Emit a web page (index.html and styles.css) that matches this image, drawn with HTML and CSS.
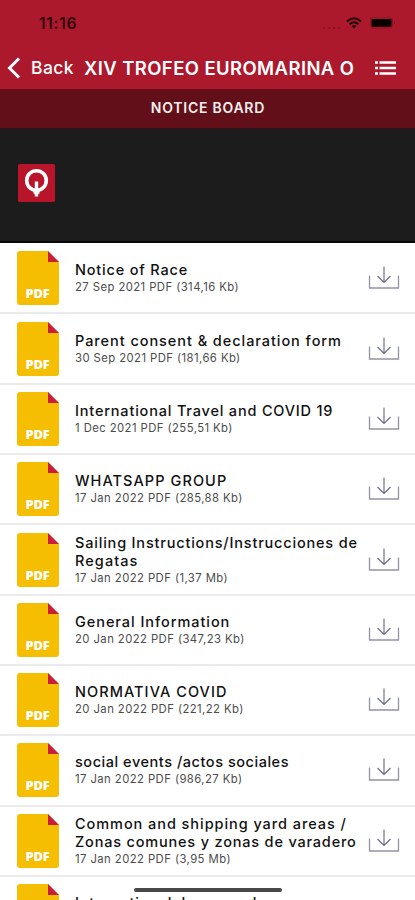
FILE: index.html
```html
<!DOCTYPE html>
<html lang="en">
<head>
<meta charset="utf-8">
<title>Notice Board</title>
<link rel="stylesheet" href="styles.css">
</head>
<body>
<svg class="defs" width="0" height="0" aria-hidden="true">
  <symbol id="file" viewBox="0 0 42 54"><path fill="#f5be00" d="M3 0H31L42 11V51a3 3 0 0 1-3 3H3a3 3 0 0 1-3-3V3a3 3 0 0 1 3-3z"/><path fill="#c91f3c" d="M31 0L42 11H31z"/></symbol>
  <symbol id="download" viewBox="0 0 32 24"><path fill="none" stroke="#9294a4" stroke-width="1.3" d="M1.5 9.5V22H30.5V9.5"/><path fill="none" stroke="#666982" stroke-width="1.1" d="M16 .5V16.5M9.5 10L16 16.5L22.5 10"/></symbol>
</svg>
<div class="screen">
  <header class="top">
    <div class="status">
      <span class="time">11:16</span>
      <span class="dots">....</span>
      <svg class="wifi" viewBox="0 0 16 12"><g fill="none" stroke="#20060a" stroke-width="2"><path d="M.9 4.6Q8-2 15.1 4.6"/><path d="M3.6 7.3Q8 3.1 12.4 7.3"/></g><path fill="#20060a" d="M5.6 9.1Q8 7.1 10.4 9.1L8 11.6z"/></svg>
      <svg class="battery" viewBox="0 0 26 12"><rect x=".5" y=".5" width="22" height="10.5" rx="2.5" fill="none" stroke="#8d1525"/><rect x="1.5" y="2" width="20" height="7.8" rx="1" fill="#080000"/><path d="M24 4q2 1.8 0 3.6z" fill="#7b1321"/></svg>
    </div>
    <nav class="nav">
      <svg class="chevron" viewBox="0 0 14 22"><path d="M12 1.5L2.5 11L12 20.5" fill="none" stroke="#fff" stroke-width="3"/></svg>
      <span class="back">Back</span>
      <h1 class="title">XIV TROFEO EUROMARINA O</h1>
      <svg class="menu" viewBox="0 0 21 14"><path d="M0 1.5H3M4.5 1.5H21M0 7H3M4.5 7H21M0 12.5H3M4.5 12.5H21" stroke="#fff" stroke-width="2.6"/></svg>
    </nav>
  </header>
  <h2 class="board">NOTICE BOARD</h2>
  <div class="banner"><svg class="logo" viewBox="0 0 37 38"><rect width="37" height="38" rx="1.5" fill="#b8152b"/><circle cx="18.5" cy="16.5" r="9.8" fill="none" stroke="#fff" stroke-width="3.6"/><path d="M18.5 17.5V32.5M15.5 28H21.5" stroke="#fff" stroke-width="3.4"/></svg></div>
  <main class="list">
    <article class="row"><div class="file"><svg><use href="#file"/></svg><b>PDF</b></div><div class="text"><h3>Notice of Race</h3><p>27 Sep 2021 PDF (314,16 Kb)</p></div><svg class="download"><use href="#download"/></svg></article>
    <article class="row"><div class="file"><svg><use href="#file"/></svg><b>PDF</b></div><div class="text"><h3 class="wide">Parent consent &amp; declaration form</h3><p>30 Sep 2021 PDF (181,66 Kb)</p></div><svg class="download"><use href="#download"/></svg></article>
    <article class="row"><div class="file"><svg><use href="#file"/></svg><b>PDF</b></div><div class="text"><h3>International Travel and COVID 19</h3><p>1 Dec 2021 PDF (255,51 Kb)</p></div><svg class="download"><use href="#download"/></svg></article>
    <article class="row"><div class="file"><svg><use href="#file"/></svg><b>PDF</b></div><div class="text"><h3 class="wider">WHATSAPP GROUP</h3><p>17 Jan 2022 PDF (285,88 Kb)</p></div><svg class="download"><use href="#download"/></svg></article>
    <article class="row"><div class="file"><svg><use href="#file"/></svg><b>PDF</b></div><div class="text"><h3>Sailing Instructions/Instrucciones de<br><span class="wider">Regatas</span></h3><p>17 Jan 2022 PDF (1,37 Mb)</p></div><svg class="download"><use href="#download"/></svg></article>
    <article class="row"><div class="file"><svg><use href="#file"/></svg><b>PDF</b></div><div class="text"><h3 class="wide">General Information</h3><p>20 Jan 2022 PDF (347,23 Kb)</p></div><svg class="download"><use href="#download"/></svg></article>
    <article class="row"><div class="file"><svg><use href="#file"/></svg><b>PDF</b></div><div class="text"><h3 class="wider">NORMATIVA COVID</h3><p>20 Jan 2022 PDF (221,22 Kb)</p></div><svg class="download"><use href="#download"/></svg></article>
    <article class="row"><div class="file"><svg><use href="#file"/></svg><b>PDF</b></div><div class="text"><h3 class="tight">social events /actos sociales</h3><p>17 Jan 2022 PDF (986,27 Kb)</p></div><svg class="download"><use href="#download"/></svg></article>
    <article class="row"><div class="file"><svg><use href="#file"/></svg><b>PDF</b></div><div class="text"><h3><span class="wide">Common and shipping yard areas /</span><br>Zonas comunes y zonas de varadero</h3><p>17 Jan 2022 PDF (3,95 Mb)</p></div><svg class="download"><use href="#download"/></svg></article>
    <article class="row"><div class="file"><svg><use href="#file"/></svg></div><div class="text"><h3>International Jury members</h3><p>&nbsp;</p></div></article>
  </main>
  <div class="home"></div>
</div>
</body>
</html>
```
FILE: styles.css
```css
* { box-sizing: border-box; margin: 0; }
body { font-family: Inter, "Liberation Sans", sans-serif; background: #fff; }
svg { display: block; flex: none; }
.defs { position: absolute; }
.screen { position: relative; width: 415px; height: 900px; overflow: hidden; }
.top { height: 89px; background: #ac182c; }
.status { height: 46px; padding: 0 19px 0 39px; display: flex; align-items: center; }
.time { flex: 1; font-size: 15.5px; font-weight: 600; color: #30060c; letter-spacing: .75px; }
.dots { font-size: 14px; color: #74121f; letter-spacing: 1px; margin-right: 4px; }
.wifi { width: 16px; height: 12px; margin-right: 8px; }
.battery { width: 26px; height: 12px; }
.nav { height: 43px; display: flex; align-items: center; padding: 0 19px 0 7px; color: #fff; white-space: nowrap; }
.chevron { width: 14px; height: 22px; margin-right: 10px; }
.back { width: 53px; font-size: 17.5px; font-weight: 500; letter-spacing: .4px; }
.title { flex: 1; font-size: 18.5px; font-weight: 600; letter-spacing: .4px; }
.menu { width: 21px; height: 14px; }
.board { height: 40px; border-bottom: 1px solid #321017; background: #630f19; color: #f6eeee; font-size: 14px; line-height: 38px; font-weight: 600; letter-spacing: .75px; text-indent: 1px; text-align: center; }
.banner { height: 114.3px; padding: 35px 18px; background: #1c1c1c; border-bottom: 2px solid #080808; }
.logo { width: 37px; height: 38px; }
.list { padding-top: .9px; }
.row { height: 70.3px; border-bottom: 2px solid #ebebeb; display: flex; align-items: center; padding: 0 15px 0 16.5px; }
.file { position: relative; width: 42px; height: 54px; margin-right: 16.5px; }
.file svg { width: 42px; height: 54px; }
.file b { position: absolute; left: 0; right: 0; bottom: 4px; text-align: center; color: #fff; font: 800 13px/15px "Open Sans", sans-serif; letter-spacing: -.2px; }
.text { flex: 1; white-space: nowrap; }
.text h3 { font-size: 14.5px; line-height: 18px; font-weight: 500; letter-spacing: .81px; color: #111; }
.text .wide { letter-spacing: .94px; }
.text .wider { letter-spacing: 1.07px; }
.text .tight { letter-spacing: .54px; }
.text p { font-size: 11.3px; line-height: 16px; letter-spacing: .43px; color: #4c4c4c; }
.download { width: 32px; height: 24px; }
.home { position: absolute; left: 134px; top: 888px; width: 148px; height: 4px; border-radius: 2px; background: #484848; }
```
